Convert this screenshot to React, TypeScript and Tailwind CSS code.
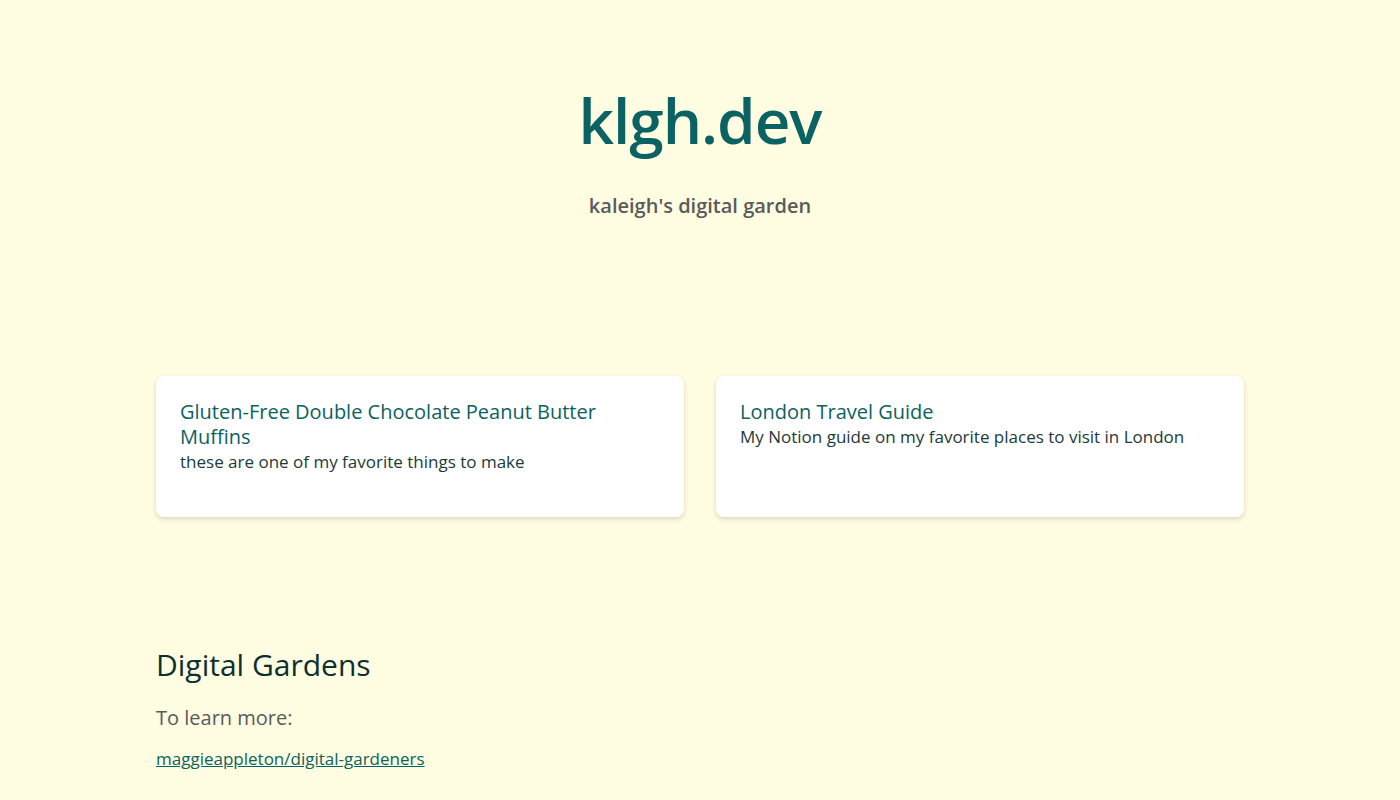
import React from 'react';

interface Card {
    title: string;
    description: string;
}

const cards: Card[] = [
    { title: 'Gluten-Free Double Chocolate Peanut Butter Muffins', description: 'these are one of my favorite things to make' },
    { title: 'London Travel Guide', description: 'My Notion guide on my favorite places to visit in London' },
];

const App: React.FC = () => {
    return (
        <div className="min-h-screen bg-[#fefde1] font-['Open_Sans','Noto_Sans',sans-serif]">
            <header className="flex flex-col items-center pt-[76px]">
                <h1 className="text-[62px] leading-[88px] font-semibold text-[#0b6262] tracking-[-1px]">klgh.dev</h1>
                <p className="mt-[28px] text-[20px] leading-[28px] font-semibold text-[#5a5a5a]">kaleigh's digital garden</p>
            </header>

            <main className="mx-auto max-w-[1088px] pt-[156px]">
                <div className="grid grid-cols-2 gap-8">
                    {cards.map(card => (
                        <div key={card.title} className="h-[141px] rounded-lg bg-white px-6 pt-[23px] shadow-[0_2px_5px_rgba(0,0,0,0.15)]">
                            <h3 className="text-[20px] leading-[25px] text-[#0b6262]">{card.title}</h3>
                            <p className="text-[17px] leading-[26px] text-[#1b3a3a]">{card.description}</p>
                        </div>
                    ))}
                </div>

                <section className="pt-[128px]">
                    <h2 className="text-[30px] leading-[40px] font-medium text-[#0d2f30]">Digital Gardens</h2>
                    <p className="mt-[19px] text-[20px] leading-[28px] font-medium text-[#5a5a5a]">To learn more:</p>
                    <a href="#" className="mt-[15px] inline-block text-[17px] leading-[24px] text-[#0b6262] underline">maggieappleton/digital-gardeners</a>
                </section>
            </main>
        </div>
    );
};

export default App;
